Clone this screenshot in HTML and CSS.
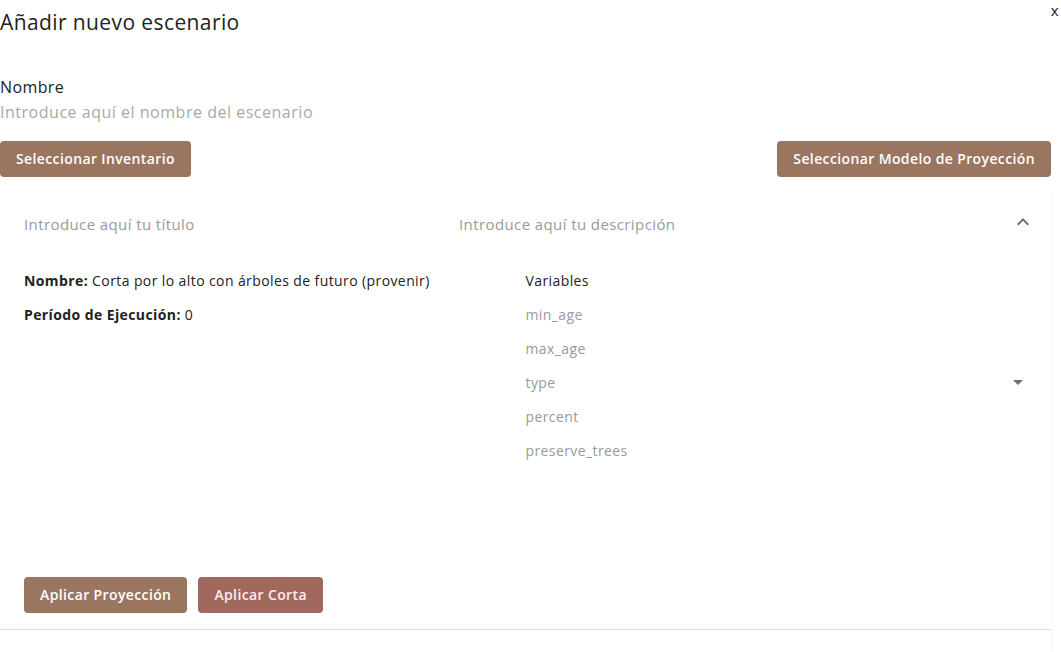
FILE: index.html
```html
<!DOCTYPE html>
<html lang="es">
<head>
<meta charset="utf-8">
<title>Añadir nuevo escenario</title>
<link rel="stylesheet" href="styles.css">
</head>
<body>
<div class="page">
  <span class="close">x</span>
  <h2 class="title">Añadir nuevo escenario</h2>
  <div class="field">
    <label class="label" for="nombre">Nombre</label>
    <input id="nombre" class="input" placeholder="Introduce aquí el nombre del escenario">
  </div>
  <div class="actions">
    <button class="btn">Seleccionar Inventario</button>
    <button class="btn">Seleccionar Modelo de Proyección</button>
  </div>
  <div class="accordion">
    <div class="summary">
      <div class="summary-title">Introduce aquí tu título</div>
      <div class="summary-desc">Introduce aquí tu descripción</div>
      <svg class="chevron" viewBox="0 0 24 24" width="24" height="24"><path d="M12 8l-6 6 1.41 1.41L12 10.83l4.59 4.58L18 14z"/></svg>
    </div>
    <div class="details">
      <div class="grid">
        <div class="info">
          <div class="row"><b>Nombre:</b>&nbsp;Corta por lo alto con árboles de futuro (provenir)</div>
          <div class="row"><b>Período de Ejecución:</b>&nbsp;0</div>
        </div>
        <div class="vars">
          <div class="row var-head">Variables</div>
          <div class="row var">min_age</div>
          <div class="row var">max_age</div>
          <div class="row var select"><span>type</span><svg class="arrow" viewBox="0 0 24 24" width="24" height="24"><path d="M7 10l5 5 5-5z"/></svg></div>
          <div class="row var">percent</div>
          <div class="row var">preserve_trees</div>
        </div>
      </div>
      <div class="detail-actions">
        <button class="btn">Aplicar Proyección</button>
        <button class="btn btn-red">Aplicar Corta</button>
      </div>
    </div>
  </div>
  <div class="accordion next"></div>
</div>
</body>
</html>
```

FILE: styles.css
```css
* { box-sizing: border-box; }
html, body { margin: 0; padding: 0; background: #fff; overflow: hidden; }
body {
  font-family: "Open Sans", "Noto Sans", sans-serif;
  color: #222;
  letter-spacing: 0.4px;
  height: 652px;
}
.page {
  position: relative;
  width: 1051px;
}
.close {
  position: absolute;
  right: -8px;
  top: -6px;
  font-size: 15px;
  line-height: 18px;
  color: #222;
}
.title {
  margin: 7px 0 0;
  font-size: 21px;
  line-height: 30px;
  font-weight: 500;
  letter-spacing: 0.4px;
  color: #222;
}
.field {
  margin-top: 38px;
  display: flex;
  flex-direction: column;
}
.label {
  font-size: 16px;
  line-height: 24px;
  color: #222;
}
.input {
  border: none;
  outline: none;
  padding: 0;
  margin: 1px 0 0;
  font-family: inherit;
  font-size: 16px;
  letter-spacing: 0.52px;
  line-height: 24px;
  height: 24px;
  width: 400px;
  color: #222;
  background: transparent;
}
.input::placeholder { color: #a9a9a9; }
.actions {
  margin-top: 17px;
  display: flex;
  justify-content: space-between;
}
.btn {
  height: 36px;
  padding: 0 16px;
  border: none;
  border-radius: 4px;
  background: #9a7560;
  color: #fff;
  font-family: inherit;
  font-size: 14px;
  font-weight: 600;
  letter-spacing: 0.38px;
  line-height: 34px;
}
.btn-red { background: #a1685d; color: #fbeeee; }
.accordion {
  margin-top: 15px;
  background: #fff;
  border-radius: 4px 4px 0 0;
  box-shadow: 0 2px 1px -1px rgba(0,0,0,0.12), 0 1px 1px 0 rgba(0,0,0,0.08), 0 1px 3px 0 rgba(0,0,0,0.08);
}
.summary {
  height: 64px;
  padding: 0 16px 0 24px;
  display: grid;
  grid-template-columns: 435px 1fr 24px;
  align-items: center;
}
.summary-title, .summary-desc {
  font-size: 15px;
  color: #9a9a9a;
}
.chevron { fill: #6f6f6f; margin-top: -4px; }
.details {
  padding: 7px 24px 16px;
}
.grid {
  display: grid;
  grid-template-columns: 1fr 1fr;
}
.row {
  height: 34px;
  display: flex;
  align-items: center;
  font-size: 14px;
  color: #222;
}
.row b { font-weight: 700; }
.var { color: #9a9a9a; }
.select { justify-content: space-between; }
.arrow { fill: #6f6f6f; margin-right: -3px; }
.detail-actions {
  margin-top: 110px;
  display: flex;
  gap: 11px;
}
.next {
  margin-top: 0;
  height: 23px;
  border-radius: 0;
  border-top: 1px solid #e0e0e0;
}
```
